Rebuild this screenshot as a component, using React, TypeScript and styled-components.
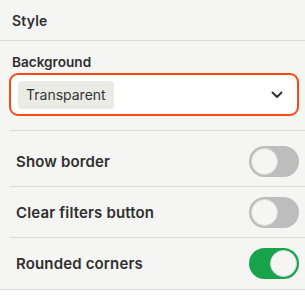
import { FunctionComponent, useState } from "react";
import styled, { createGlobalStyle } from "styled-components";

const GlobalStyle = createGlobalStyle`
  html, body {
    margin: 0;
    padding: 0;
    background: #ffffff;
  }
  body {
    font-family: Inter, "Noto Sans", sans-serif;
    color: #2f2f2f;
  }
`;

interface ToggleRowProps {
  label: string;
  defaultOn?: boolean;
}

const ToggleRow: FunctionComponent<ToggleRowProps> = ({
  label,
  defaultOn = false,
}: ToggleRowProps) => {
  const [on, setOn] = useState<boolean>(defaultOn);

  return (
    <Row>
      <RowLabel>{label}</RowLabel>
      <Switch on={on} onClick={() => setOn(!on)} aria-pressed={on}>
        <Knob on={on} />
      </Switch>
    </Row>
  );
};

const App = () => {
  return (
    <>
      <GlobalStyle />
      <Panel>
        <Header>Style</Header>
        <Section>
          <FieldLabel>Background</FieldLabel>
          <Select>
            <Tag>Transparent</Tag>
            <svg width="12" height="8" viewBox="0 0 12 8" fill="none">
              <path
                d="M1.5 1.5L6 6L10.5 1.5"
                stroke="#333"
                strokeWidth="2"
                strokeLinecap="round"
                strokeLinejoin="round"
              />
            </svg>
          </Select>
        </Section>
        <Rows>
          <ToggleRow label="Show border" />
          <ToggleRow label="Clear filters button" />
          <ToggleRow label="Rounded corners" defaultOn />
        </Rows>
      </Panel>
    </>
  );
};

const Panel = styled.div`
  width: 305px;
  background: #f5f5f3;
  border-bottom: 1px solid #dcdcdc;
`;

const Header = styled.div`
  height: 40px;
  padding-left: 12px;
  display: flex;
  align-items: center;
  font-size: 14px;
  font-weight: 600;
  letter-spacing: 0.2px;
  border-bottom: 1px solid #dcdcdc;
`;

const Section = styled.div`
  padding: 11px 6px 14px 9px;
`;

const FieldLabel = styled.div`
  font-size: 13.6px;
  font-weight: 600;
  padding-left: 3px;
  line-height: 20px;
  margin-bottom: 1px;
`;

const Select = styled.div`
  height: 43px;
  box-sizing: border-box;
  border: 2px solid #fa4a14;
  border-radius: 9px;
  background: #ffffff;
  display: flex;
  align-items: center;
  justify-content: space-between;
  padding: 0 14px 0 7px;
`;

const Tag = styled.span`
  background: #ebebe6;
  border-radius: 4px;
  padding: 0 8px;
  height: 28px;
  display: flex;
  align-items: center;
  font-size: 14px;
  color: #333;
`;

const Rows = styled.div`
  margin-left: 10px;
`;

const Row = styled.div`
  box-sizing: border-box;
  height: 51px;
  border-top: 1px solid #dcdcdc;
  display: flex;
  align-items: center;
  justify-content: space-between;
  padding: 0 6px;

  &:first-child {
    height: 56px;
    padding-top: 5px;
  }

  &:last-child {
    height: 52px;
  }
`;

const RowLabel = styled.span`
  font-size: 15px;
  font-weight: 600;
  letter-spacing: 0.15px;
  color: #2f2f2f;
`;

interface OnProps {
  readonly on: boolean;
}

const Switch = styled.button<OnProps>`
  position: relative;
  width: 50px;
  height: 31px;
  border: none;
  padding: 0;
  border-radius: 16px;
  background: ${(props) => (props.on ? "#16a34a" : "#bdbdbd")};
  cursor: pointer;
`;

const Knob = styled.span<OnProps>`
  position: absolute;
  top: 2px;
  left: ${(props) => (props.on ? "21px" : "2px")};
  width: 27px;
  height: 27px;
  box-sizing: border-box;
  border-radius: 50%;
  background: #f5f5f3;
  border: 1px solid #d8d8d8;
`;

export default App;
